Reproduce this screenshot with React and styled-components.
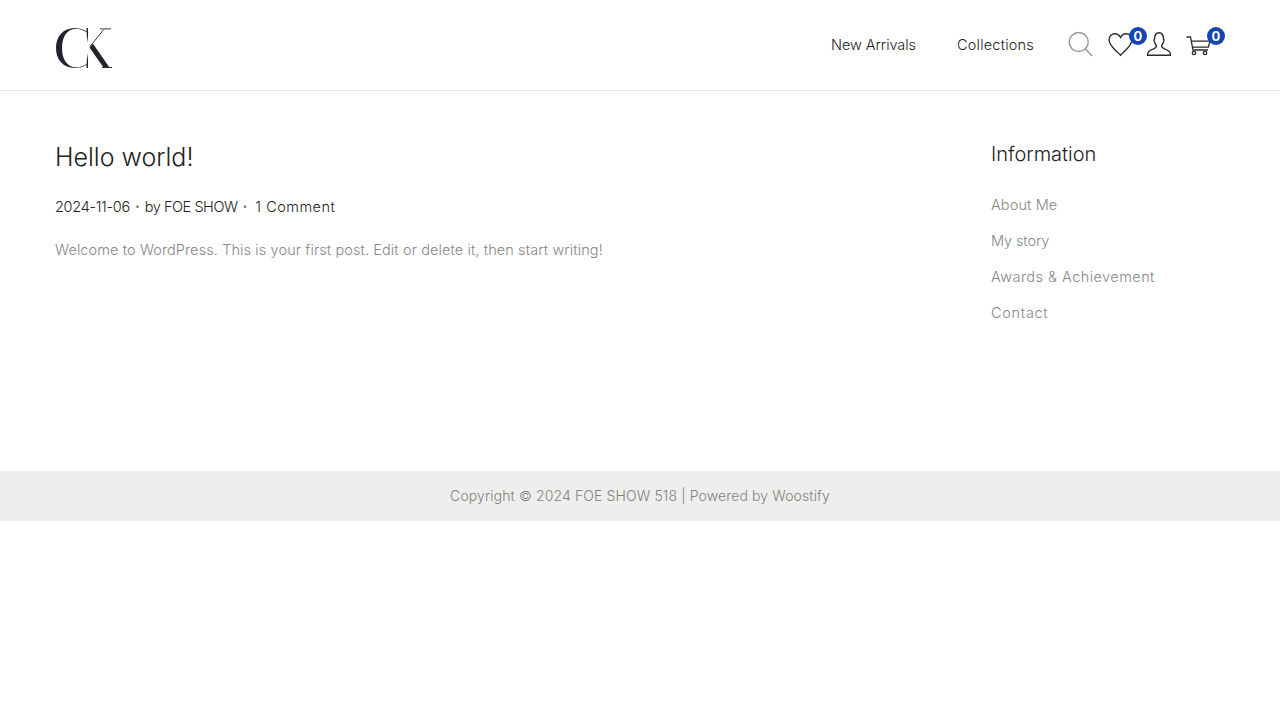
import React from "react";
import styled, { createGlobalStyle } from "styled-components";

const Global = createGlobalStyle`
  html, body { margin: 0; padding: 0; background: #fff; }
  body { font-family: Inter, "Open Sans", "Liberation Sans", sans-serif; font-size: 15px; color: #8f8f8f; }
  a { color: inherit; text-decoration: none; }
`;

const Page = styled.div`
  width: 1280px;
  height: 720px;
  overflow: hidden;
`;

const Header = styled.header`
  box-sizing: border-box;
  height: 91px;
  border-bottom: 1px solid #e8e8e8;
  padding: 0 55px;
  display: flex;
  align-items: center;
  justify-content: space-between;
`;

const Logo = styled.a`
  display: block;
  width: 60px;
  height: 40px;
  margin-top: 6px;
`;

const Right = styled.div`
  display: flex;
  align-items: center;
`;

const Nav = styled.nav`
  display: flex;
  gap: 41px;
  margin-right: 34px;
`;

const NavLink = styled.a`
  font-size: 14.5px;
  font-weight: 350;
  line-height: 22px;
  letter-spacing: ${(p) => p.$ls || 0}px;
  color: #222;
`;

const Icons = styled.div`
  display: flex;
  align-items: flex-start;
  height: 26px;
  margin-right: 14px;
`;

const IconButton = styled.a`
  position: relative;
  display: block;
  width: ${(p) => p.$w}px;
  height: 26px;
  margin-left: ${(p) => p.$ml || 0}px;
`;

const Svg = styled.svg`
  display: block;
  overflow: visible;
  margin-top: ${(p) => p.$top || 0}px;
`;

const Badge = styled.span`
  position: absolute;
  top: -5px;
  right: -14px;
  width: 18px;
  height: 18px;
  border-radius: 50%;
  background: #1346af;
  color: #fff;
  font-size: 13px;
  font-weight: 700;
  line-height: 18px;
  text-align: center;
`;

const Main = styled.main`
  box-sizing: border-box;
  height: 380px;
  padding: 0 55px;
  display: flex;
  justify-content: space-between;
`;

const Article = styled.article`
  padding-top: 49px;
`;

const Title = styled.h1`
  margin: 0;
  font-size: 25px;
  font-weight: 350;
  line-height: 34px;
  color: #222;
`;

const Meta = styled.div`
  margin-top: 22px;
  display: flex;
  font-size: 14.5px;
  font-weight: 350;
  line-height: 22px;
  color: #222;
`;

const MetaText = styled.span`
  letter-spacing: ${(p) => p.$ls || 0}px;
`;

const Dot = styled.span`
  margin: 0 ${(p) => p.$right}px 0 5px;
  font-weight: 700;
  color: #666;
`;

const Body = styled.p`
  margin: 21px 0 0;
  font-size: 14.5px;
  font-weight: 350;
  line-height: 22px;
  letter-spacing: 0.1px;
  color: #878787;
`;

const Aside = styled.aside`
  width: 234px;
  padding-top: 50px;
`;

const AsideTitle = styled.h2`
  margin: 0;
  font-size: 20px;
  font-weight: 350;
  line-height: 26px;
  color: #222;
`;

const Links = styled.ul`
  list-style: none;
  margin: 27px 0 0;
  padding: 0;
  display: flex;
  flex-direction: column;
  gap: 14px;
`;

const LinkItem = styled.li`
  font-size: 14.5px;
  font-weight: 350;
  line-height: 22px;
  letter-spacing: ${(p) => p.$ls || 0}px;
  color: #878787;
`;

const Footer = styled.footer`
  height: 50px;
  padding-bottom: 1px;
  box-sizing: border-box;
  background: #eeeeec;
  display: flex;
  align-items: center;
  justify-content: center;
  font-size: 14px;
  font-weight: 350;
  letter-spacing: 0.12px;
  color: #828282;
`;

const LogoMark = () => (
  <Svg width="60" height="40" viewBox="0 0 60 40" role="img" aria-label="CK">
    <path
      fill="#23232e"
      d="M32 3.500C28 1.200 24 0 20 0 8 0 1 8.500 1 20s7 20 19 20c4 0 9-1 12-3.800v-.800C29 38.300 24 39.300 21 39.300 12 39.300 7 31 7 20S12 .7 21 .7c3 0 8 1.500 11 3.800Z"
    />
    <path fill="#23232e" d="M31.500 0H33V8L32.500 15 31.800 8ZM31.500 40H33V32L32.500 25 31.800 32Z" />
    <path fill="none" stroke="#23232e" strokeWidth="0.9" d="M35 18.500 48.500 1.800M45 .9h11M47 39.500h10" />
    <path fill="#23232e" d="M34.500 19.500 38 15.800 54.500 39.500H48.500Z" />
  </Svg>
);

const SearchIcon = () => (
  <Svg width="24" height="24" viewBox="0 0 24 24" fill="none" stroke="#969696" strokeWidth="1.4">
    <circle cx="10.700" cy="10" r="9.500" />
    <path d="M17.500 17 24 24" />
  </Svg>
);

const HeartIcon = () => (
  <Svg $top={1} width="25" height="23" viewBox="0 0 25 23" fill="none" stroke="#2b2b2b" strokeWidth="1.4">
    <path d="M12.500 22.300C8.500 18 1 13 1 6.800 1 3.300 3.700.8 6.800.8c2.500 0 4.400 1.300 5.700 3.700C13.800 2.100 15.700.8 18.200.8c3.100 0 5.800 2.500 5.800 6 0 6.200-7.500 11.200-11.500 15.500Z" />
  </Svg>
);

const UserIcon = () => (
  <Svg width="24" height="24" viewBox="0 0 24 24" fill="none" stroke="#2b2b2b" strokeWidth="1.4">
    <path d="M.7 23.300h22.600v-1.500c0-2.800-2.800-4-5.800-5-1.900-.7-2.900-1.300-2.900-2.800 0-1 1.100-1.700 1.700-3.700.4-.3.700-1 .7-2 0-.6-.2-1-.5-1.200C16.500 3 15.200.8 12 .8S7.500 3 7.500 7.100c-.3.200-.5.600-.5 1.200 0 1 .3 1.700.7 2 .6 2 1.700 2.700 1.700 3.700 0 1.500-1 2.100-2.900 2.800-3 1-5.800 2.200-5.800 5v1.500Z" />
  </Svg>
);

const CartIcon = () => (
  <Svg $top={4} width="26" height="19" viewBox="0 0 26 19" fill="none" stroke="#2b2b2b" strokeWidth="1.3">
    <path d="M.5 1h4L7 14h15" />
    <path d="M5.200 5.200H24L22.300 11.200H6.400" />
    <circle cx="8" cy="17" r="1.700" />
    <circle cx="19" cy="17" r="1.700" />
  </Svg>
);

export default function App() {
  return (
    <Page>
      <Global />
      <Header>
        <Logo href="#"><LogoMark /></Logo>
        <Right>
          <Nav>
            <NavLink href="#" $ls={-0.05}>New Arrivals</NavLink>
            <NavLink href="#" $ls={0.2}>Collections</NavLink>
          </Nav>
          <Icons>
            <IconButton href="#" $w={24}><SearchIcon /></IconButton>
            <IconButton href="#" $w={25} $ml={16}>
              <HeartIcon />
              <Badge>0</Badge>
            </IconButton>
            <IconButton href="#" $w={24} $ml={14}><UserIcon /></IconButton>
            <IconButton href="#" $w={25} $ml={15}>
              <CartIcon />
              <Badge>0</Badge>
            </IconButton>
          </Icons>
        </Right>
      </Header>
      <Main>
        <Article>
          <Title>Hello world!</Title>
          <Meta>
            <MetaText $ls={-0.3}>2024-11-06</MetaText>
            <Dot $right={5}>·</Dot>
            <MetaText $ls={-0.45}>by FOE SHOW</MetaText>
            <Dot $right={8}>·</Dot>
            <MetaText $ls={0.5}>1 Comment</MetaText>
          </Meta>
          <Body>Welcome to WordPress. This is your first post. Edit or delete it, then start writing!</Body>
        </Article>
        <Aside>
          <AsideTitle>Information</AsideTitle>
          <Links>
            <LinkItem $ls={0.1}>About Me</LinkItem>
            <LinkItem $ls={-0.1}>My story</LinkItem>
            <LinkItem $ls={0.45}>Awards &amp; Achievement</LinkItem>
            <LinkItem $ls={0.7}>Contact</LinkItem>
          </Links>
        </Aside>
      </Main>
      <Footer>Copyright © 2024 FOE SHOW 518 | Powered by Woostify</Footer>
    </Page>
  );
}
